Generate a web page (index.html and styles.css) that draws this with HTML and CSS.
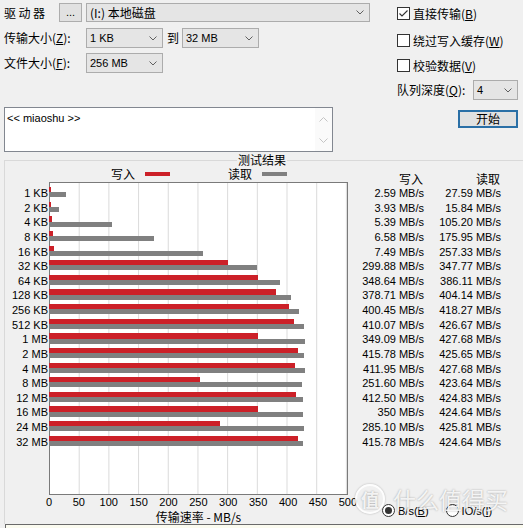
FILE: index.html
```html
<!DOCTYPE html>
<html lang="zh-CN">
<head>
<meta charset="utf-8">
<title>ATTO Disk Benchmark</title>
<link rel="stylesheet" href="styles.css">
</head>
<body>
<div class="app">
  <div class="top">
    <div class="left">
      <div class="row r1">
        <span class="lbl drive">驱动器</span>
        <span class="btn dots">...</span>
        <span class="combo wide"><span class="ctext cjk">(I:) 本地磁盘</span><svg class="chev" width="8" height="5" viewBox="0 0 8 5"><path d="M0.5 0.5 L4 4 L7.5 0.5" fill="none" stroke="#606060" stroke-width="1"/></svg></span>
      </div>
      <div class="row r2">
        <span class="lbl">传输大小(<u>Z</u>):</span>
        <span class="combo sm"><span class="ctext">1 KB</span><svg class="chev" width="8" height="5" viewBox="0 0 8 5"><path d="M0.5 0.5 L4 4 L7.5 0.5" fill="none" stroke="#606060" stroke-width="1"/></svg></span>
        <span class="to">到</span>
        <span class="combo sm"><span class="ctext">32 MB</span><svg class="chev" width="8" height="5" viewBox="0 0 8 5"><path d="M0.5 0.5 L4 4 L7.5 0.5" fill="none" stroke="#606060" stroke-width="1"/></svg></span>
      </div>
      <div class="row r3">
        <span class="lbl">文件大小(<u>F</u>):</span>
        <span class="combo sm"><span class="ctext">256 MB</span><svg class="chev" width="8" height="5" viewBox="0 0 8 5"><path d="M0.5 0.5 L4 4 L7.5 0.5" fill="none" stroke="#606060" stroke-width="1"/></svg></span>
      </div>
      <div class="memo">
        <span class="memo-text">&lt;&lt; miaoshu &gt;&gt;</span>
        <div class="vscroll">
          <svg width="9" height="5" viewBox="0 0 9 5"><path d="M0.5 4.5 L4.5 0.5 L8.5 4.5" fill="none" stroke="#c4c4c4" stroke-width="1"/></svg>
          <svg width="9" height="5" viewBox="0 0 9 5"><path d="M0.5 0.5 L4.5 4.5 L8.5 0.5" fill="none" stroke="#c4c4c4" stroke-width="1"/></svg>
        </div>
      </div>
    </div>
    <div class="right">
      <div class="cb c1"><span class="box"><svg width="11" height="11" viewBox="0 0 11 11"><path d="M1.5 5.5 L4 8 L9.5 2.5" fill="none" stroke="#333" stroke-width="1.1"/></svg></span><span class="cjk">直接传输(<u>B</u>)</span></div>
      <div class="cb c2"><span class="box"></span><span class="cjk">绕过写入缓存(<u>W</u>)</span></div>
      <div class="cb c3"><span class="box"></span><span class="cjk">校验数据(<u>V</u>)</span></div>
      <div class="row qrow">
        <span class="qlbl">队列深度(<u>Q</u>):</span>
        <span class="combo qd"><span class="ctext">4</span><svg class="chev" width="8" height="5" viewBox="0 0 8 5"><path d="M0.5 0.5 L4 4 L7.5 0.5" fill="none" stroke="#606060" stroke-width="1"/></svg></span>
      </div>
      <div class="start">开始</div>
    </div>
  </div>

  <fieldset class="results">
    <legend>测试结果</legend>
    <div class="chart">
      <div class="legend-items">
        <span class="cjk">写入</span><span class="swatch wsw"></span>
        <span class="cjk gap">读取</span><span class="swatch rsw"></span>
      </div>
      <div class="colhead wh">写入</div>
      <div class="colhead rh">读取</div>

      <div class="ylabels">
        <div>1 KB</div><div>2 KB</div><div>4 KB</div><div>8 KB</div><div>16 KB</div><div>32 KB</div>
        <div>64 KB</div><div>128 KB</div><div>256 KB</div><div>512 KB</div><div>1 MB</div><div>2 MB</div>
        <div>4 MB</div><div>8 MB</div><div>12 MB</div><div>16 MB</div><div>24 MB</div><div>32 MB</div>
      </div>

      <div class="plot"></div>
      <div class="bars">
        <div class="pair"><div class="w" style="width:1.5px"></div><div class="r" style="width:16.5px"></div></div>
        <div class="pair"><div class="w" style="width:2.4px"></div><div class="r" style="width:9.5px"></div></div>
        <div class="pair"><div class="w" style="width:3.2px"></div><div class="r" style="width:62.9px"></div></div>
        <div class="pair"><div class="w" style="width:3.9px"></div><div class="r" style="width:105.2px"></div></div>
        <div class="pair"><div class="w" style="width:4.5px"></div><div class="r" style="width:153.9px"></div></div>
        <div class="pair"><div class="w" style="width:179.3px"></div><div class="r" style="width:208px"></div></div>
        <div class="pair"><div class="w" style="width:208.5px"></div><div class="r" style="width:230.9px"></div></div>
        <div class="pair"><div class="w" style="width:226.5px"></div><div class="r" style="width:241.7px"></div></div>
        <div class="pair"><div class="w" style="width:239.5px"></div><div class="r" style="width:250.1px"></div></div>
        <div class="pair"><div class="w" style="width:245.2px"></div><div class="r" style="width:255.1px"></div></div>
        <div class="pair"><div class="w" style="width:208.8px"></div><div class="r" style="width:255.8px"></div></div>
        <div class="pair"><div class="w" style="width:248.6px"></div><div class="r" style="width:254.5px"></div></div>
        <div class="pair"><div class="w" style="width:246.3px"></div><div class="r" style="width:255.8px"></div></div>
        <div class="pair"><div class="w" style="width:150.5px"></div><div class="r" style="width:253.3px"></div></div>
        <div class="pair"><div class="w" style="width:246.7px"></div><div class="r" style="width:254px"></div></div>
        <div class="pair"><div class="w" style="width:209.3px"></div><div class="r" style="width:253.9px"></div></div>
        <div class="pair"><div class="w" style="width:170.5px"></div><div class="r" style="width:254.6px"></div></div>
        <div class="pair"><div class="w" style="width:248.6px"></div><div class="r" style="width:253.9px"></div></div>
      </div>

      <div class="vals wv">
        <div>2.59 MB/s</div><div>3.93 MB/s</div><div>5.39 MB/s</div><div>6.58 MB/s</div><div>7.49 MB/s</div><div>299.88 MB/s</div>
        <div>348.64 MB/s</div><div>378.71 MB/s</div><div>400.45 MB/s</div><div>410.07 MB/s</div><div>349.09 MB/s</div><div>415.78 MB/s</div>
        <div>411.95 MB/s</div><div>251.60 MB/s</div><div>412.50 MB/s</div><div>350 MB/s</div><div>285.10 MB/s</div><div>415.78 MB/s</div>
      </div>
      <div class="vals rv">
        <div>27.59 MB/s</div><div>15.84 MB/s</div><div>105.20 MB/s</div><div>175.95 MB/s</div><div>257.33 MB/s</div><div>347.77 MB/s</div>
        <div>386.11 MB/s</div><div>404.14 MB/s</div><div>418.27 MB/s</div><div>426.67 MB/s</div><div>427.68 MB/s</div><div>425.65 MB/s</div>
        <div>427.68 MB/s</div><div>423.64 MB/s</div><div>424.83 MB/s</div><div>424.64 MB/s</div><div>425.81 MB/s</div><div>424.64 MB/s</div>
      </div>

      <div class="xaxis">
        <span>0</span><span>50</span><span>100</span><span>150</span><span>200</span><span>250</span><span>300</span><span>350</span><span>400</span><span>450</span><span>500</span>
      </div>
      <div class="xtitle">传输速率 - MB/s</div>

      <div class="units">
        <span class="radio on"><span class="dot"></span></span><span class="rlabel">B/s(<u>B</u>)</span>
        <span class="radio r2btn"></span><span class="rlabel">IO/s(<u>I</u>)</span>
      </div>
    </div>
  </fieldset>
  <div class="status"></div>

  <div class="watermark">
    <span class="wm-circle">值</span>
    <span class="wm-text">什么值得买</span>
  </div>
</div>
</body>
</html>
```

FILE: styles.css
```css
* { box-sizing: border-box; }
html, body {
  margin: 0;
  padding: 0;
  background: #f0f0f0;
  width: 523px;
  height: 528px;
  overflow: hidden;
}
body {
  font-family: "Liberation Sans", "Noto Sans CJK SC", sans-serif;
  font-size: 12px;
  color: #000;
}
.cjk, .lbl, .to, .qlbl, .start, legend, .colhead, .xtitle, .legend-items {
  font-family: "Noto Sans CJK SC", "Liberation Sans", sans-serif;
}
u { text-decoration: underline; text-underline-offset: 1px; }

.app { position: relative; width: 523px; height: 528px; }

/* ---------- top controls ---------- */
.top { display: flex; padding-left: 4px; height: 152px; }
.left { width: 393px; }
.right { width: 126px; }

.row { display: flex; align-items: center; }
.r1 { margin-top: 3px; height: 19px; }
.r2 { margin-top: 6px; height: 20px; }
.r3 { margin-top: 5px; height: 20px; }

.lbl { width: 82px; line-height: 14px; white-space: nowrap; }
.lbl.drive { width: 55px; letter-spacing: 2.5px; }

.btn {
  display: flex; align-items: center; justify-content: center;
  background: #e1e1e1; border: 1px solid #adadad;
}
.dots { width: 23px; height: 19px; margin-right: 4px; font-size: 11px; padding-bottom: 2px; }

.combo {
  display: flex; align-items: center; justify-content: space-between;
  background: #e5e5e5; border: 1px solid #acacac;
  padding: 0 5px 0 3px; height: 20px;
}
.combo.wide { width: 284px; height: 19px; }
.combo.sm { width: 77px; }
.combo.qd { width: 45px; }
.ctext { font-size: 11px; line-height: 14px; white-space: nowrap; }
.ctext.cjk { font-size: 12px; }
.chev { display: block; flex: none; }
.to { width: 19px; padding-left: 4px; line-height: 14px; }

.memo {
  margin-top: 34px; width: 329px; height: 45px;
  background: #fff; border: 1px solid #828790;
  display: flex; justify-content: space-between;
}
.memo-text { font-size: 11px; line-height: 14px; padding: 3px 0 0 2px; }
.vscroll {
  width: 17px; background: #fafafa;
  display: flex; flex-direction: column; justify-content: space-between; align-items: center;
  padding: 9px 0 8px;
}
.vscroll svg { display: block; }

.cb { display: flex; align-items: center; height: 13px; line-height: 14px; white-space: nowrap; }
.c1 { margin-top: 7px; }
.c2 { margin-top: 14px; }
.c3 { margin-top: 12px; }
.box {
  width: 13px; height: 13px; background: #fff; border: 1px solid #333;
  margin-right: 3px; display: flex; align-items: center; justify-content: center; flex: none;
}
.box svg { display: block; }
.qrow { margin-top: 8px; height: 20px; }
.qlbl { width: 76px; line-height: 14px; white-space: nowrap; }
.start {
  margin: 10px 0 0 61px; width: 60px; height: 18px;
  background: #e1e1e1; border: 2px solid #2a6fa6;
  display: flex; align-items: center; justify-content: center; line-height: 14px;
}

/* ---------- results group ---------- */
.results {
  margin: 1px 0 0 4px; padding: 0; min-width: 0;
  width: 530px; height: 371px;
  border: 1px solid #d9d9d9; border-right: none; border-bottom: none;
}
.results legend {
  margin-left: 232px; padding: 0 1px; font-size: 12px; line-height: 14px;
}

.chart {
  display: grid;
  grid-template-columns: 44px 299px 76px 77px;
  grid-template-rows: 14.5px 313px 15px 15px;
}

.legend-items {
  grid-column: 2; grid-row: 1; align-self: center;
  display: flex; align-items: center; padding-left: 62px; line-height: 14px;
}
.swatch { display: block; width: 25px; height: 4px; margin-left: 10px; }
.wsw { background: #cc2028; }
.rsw { background: #808080; }
.legend-items .gap { margin-left: 58px; }

.colhead { grid-row: 1 / 3; align-self: start; margin-top: 5px; line-height: 14px; text-align: right; padding-right: 1px; }
.wh { grid-column: 3; }
.rh { grid-column: 4; }

.ylabels, .bars, .vals {
  grid-row: 2; padding-top: 5.5px; display: flex; flex-direction: column;
}
.ylabels { grid-column: 1; padding-right: 1px; text-align: right; }
.ylabels div, .vals div { height: 14.63px; line-height: 13px; font-size: 11px; white-space: nowrap; }
.vals { text-align: right; padding-right: 0; }
.wv { grid-column: 3; }
.rv { grid-column: 4; padding-right: 0; }

.plot {
  grid-column: 2; grid-row: 2;
  border: 1px solid #7a7a7a; background-color: #fff;
  background-image: linear-gradient(to right, transparent calc(100% - 1px), #dadada calc(100% - 1px));
  background-size: 10% 100%;
}
.bars { grid-column: 2; }
.pair { height: 14.63px; }
.pair .w { height: 5.3px; background: #cc2028; }
.pair .r { height: 5px; background: #808080; }

.xaxis {
  grid-column: 1 / 4; grid-row: 3;
  display: flex; padding-left: 29px; font-size: 11px; line-height: 14px;
}
.xaxis span { width: 29.9px; flex: none; text-align: center; }
.xtitle { grid-column: 2; grid-row: 4; text-align: center; line-height: 14px; }

.units {
  grid-column: 3 / 5; grid-row: 3 / 5; align-self: center;
  display: flex; align-items: center; padding-left: 34px; padding-top: 2px;
  font-size: 11px; line-height: 14px;
}
.radio {
  width: 13px; height: 13px; border-radius: 50%; background: #fff; border: 1px solid #333;
  display: flex; align-items: center; justify-content: center; flex: none;
}
.radio .dot { width: 7px; height: 7px; border-radius: 50%; background: #333; }
.rlabel { margin-left: 3px; }
.r2btn { margin-left: 17px; }

.status {
  margin-left: 5px; height: 10px; background: #fbfbf0;
  border-top: 1px solid #6a6a6a; border-left: 1px solid #6a6a6a;
}

/* ---------- watermark overlay ---------- */
.watermark {
  position: absolute; left: 355px; top: 484px;
  display: flex; align-items: center; pointer-events: none;
  font-family: "Noto Sans CJK SC", sans-serif;
  color: rgba(255, 255, 255, 0.85);
  text-shadow: 0 0 2px rgba(0, 0, 0, 0.35);
}
.wm-circle {
  width: 30px; height: 30px; border-radius: 50%;
  border: 2px solid rgba(255, 255, 255, 0.85);
  box-shadow: 0 0 2px rgba(0, 0, 0, 0.3);
  display: flex; align-items: center; justify-content: center;
  font-size: 18px; font-weight: bold; line-height: 1;
}
.wm-text { margin-left: 8px; font-size: 23px; line-height: 26px; letter-spacing: 0; }
```
